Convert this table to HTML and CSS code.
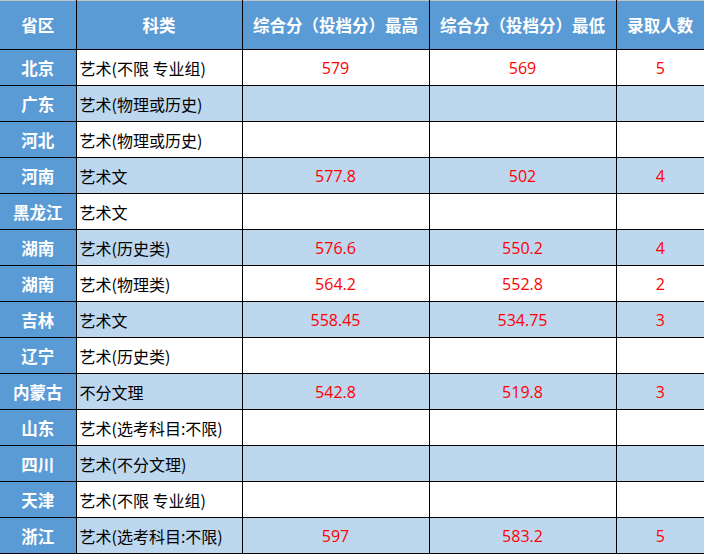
FILE: index.html
```html
<!DOCTYPE html>
<html lang="zh">
<head>
<meta charset="utf-8">
<link rel="stylesheet" href="styles.css">
</head>
<body>
<table class="score">
  <colgroup>
    <col class="c1"><col class="c2"><col class="c3"><col class="c4"><col class="c5">
  </colgroup>
  <thead>
    <tr><th>省区</th><th>科类</th><th>综合分（投档分）最高</th><th>综合分（投档分）最低</th><th>录取人数</th></tr>
  </thead>
  <tbody>
    <tr class="w"><th>北京</th><td class="t">艺术(不限 专业组)</td><td class="n">579</td><td class="n">569</td><td class="n">5</td></tr>
    <tr class="b"><th>广东</th><td class="t">艺术(物理或历史)</td><td></td><td></td><td></td></tr>
    <tr class="w"><th>河北</th><td class="t">艺术(物理或历史)</td><td></td><td></td><td></td></tr>
    <tr class="b"><th>河南</th><td class="t">艺术文</td><td class="n">577.8</td><td class="n">502</td><td class="n">4</td></tr>
    <tr class="w"><th>黑龙江</th><td class="t">艺术文</td><td></td><td></td><td></td></tr>
    <tr class="b"><th>湖南</th><td class="t">艺术(历史类)</td><td class="n">576.6</td><td class="n">550.2</td><td class="n">4</td></tr>
    <tr class="w"><th>湖南</th><td class="t">艺术(物理类)</td><td class="n">564.2</td><td class="n">552.8</td><td class="n">2</td></tr>
    <tr class="b"><th>吉林</th><td class="t">艺术文</td><td class="n">558.45</td><td class="n">534.75</td><td class="n">3</td></tr>
    <tr class="w"><th>辽宁</th><td class="t">艺术(历史类)</td><td></td><td></td><td></td></tr>
    <tr class="b"><th>内蒙古</th><td class="t">不分文理</td><td class="n">542.8</td><td class="n">519.8</td><td class="n">3</td></tr>
    <tr class="w"><th>山东</th><td class="t">艺术(选考科目:不限)</td><td></td><td></td><td></td></tr>
    <tr class="b"><th>四川</th><td class="t">艺术(不分文理)</td><td></td><td></td><td></td></tr>
    <tr class="w"><th>天津</th><td class="t">艺术(不限 专业组)</td><td></td><td></td><td></td></tr>
    <tr class="b"><th>浙江</th><td class="t">艺术(选考科目:不限)</td><td class="n">597</td><td class="n">583.2</td><td class="n">5</td></tr>
  </tbody>
</table>
</body>
</html>
```
FILE: styles.css
```css
html, body {
  margin: 0;
  padding: 0;
  background: #ffffff;
}
body {
  font-family: "Noto Sans CJK SC", "Noto Sans", sans-serif;
}
.score {
  border-collapse: collapse;
  table-layout: fixed;
  width: 704px;
  border-top: 1px solid #c4c4c4;
}
.c1 { width: 76px; }
.c2 { width: 166px; }
.c3 { width: 187px; }
.c4 { width: 187px; }
.c5 { width: 88px; }
.score th,
.score td {
  border: 1px solid #000;
  padding: 0;
  white-space: nowrap;
  overflow: hidden;
}
.score thead th {
  height: 48px;
  background: #5b9bd5;
  color: #ffffff;
  font-weight: bold;
  font-size: 16.5px;
  text-align: center;
  border-top: none;
}
.score tbody th {
  background: #5b9bd5;
  color: #ffffff;
  font-weight: bold;
  font-size: 16.5px;
  text-align: center;
  height: 35px;
}
.score tr > :first-child { border-left: none; }
.score tr > :last-child { border-right: none; }
.score tbody td { height: 35px; font-size: 16px; }
.w td { background: #ffffff; }
.b td { background: #bdd7ee; }
.t {
  color: #000;
  text-align: left;
  padding-left: 3px !important;
}
.n {
  color: #ff0000;
  text-align: center;
  font-family: "Open Sans", "Noto Sans", sans-serif;
}
```
